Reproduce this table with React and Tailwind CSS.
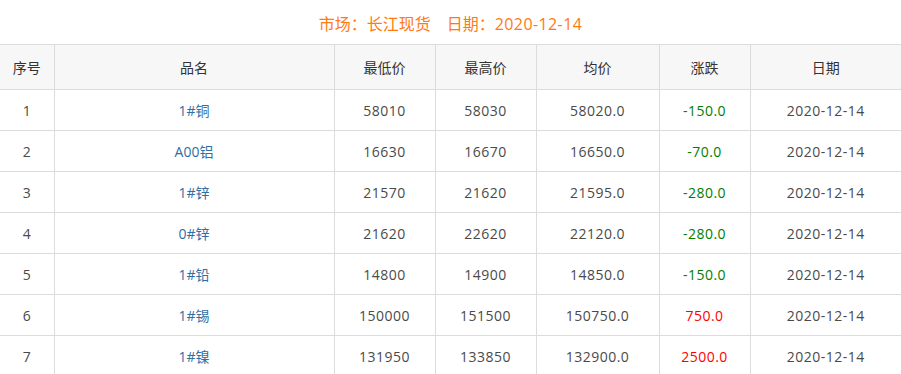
import React from 'react';

const rows = [
  { id: 1, name: '1#铜', low: '58010', high: '58030', avg: '58020.0', change: '-150.0', date: '2020-12-14' },
  { id: 2, name: 'A00铝', low: '16630', high: '16670', avg: '16650.0', change: '-70.0', date: '2020-12-14' },
  { id: 3, name: '1#锌', low: '21570', high: '21620', avg: '21595.0', change: '-280.0', date: '2020-12-14' },
  { id: 4, name: '0#锌', low: '21620', high: '22620', avg: '22120.0', change: '-280.0', date: '2020-12-14' },
  { id: 5, name: '1#铅', low: '14800', high: '14900', avg: '14850.0', change: '-150.0', date: '2020-12-14' },
  { id: 6, name: '1#锡', low: '150000', high: '151500', avg: '150750.0', change: '750.0', date: '2020-12-14' },
  { id: 7, name: '1#镍', low: '131950', high: '133850', avg: '132900.0', change: '2500.0', date: '2020-12-14' },
];

const headers = ['序号', '品名', '最低价', '最高价', '均价', '涨跌', '日期'];
const widths = ['w-[54px]', 'w-[280px]', 'w-[101px]', 'w-[101px]', 'w-[123px]', 'w-[91px]', 'w-[151px]'];

// numeric cells get a touch of tracking so digits run as wide as the original
const num = 'text-center border-b border-l border-[#dcdcdc] tracking-[0.5px]';

const App = () => {
  return (
    <div className="w-[901px] bg-white font-['Open_Sans','Noto_Sans_CJK_SC',sans-serif] text-[#4a4a4a]">
      <div className="h-[44px] flex items-center justify-center pt-[4px] text-[16px] text-[#ff7a12]">
        <span>市场：长江现货</span>
        <span className="ml-[16px]">日期：<span className="tracking-[0.4px]">2020-12-14</span></span>
      </div>

      <table className="w-[901px] table-fixed border-collapse text-[14px]">
        <thead>
          <tr className="bg-[#f7f7f7] h-[45px]">
            {headers.map((h, i) => (
              <th
                key={h}
                className={`${widths[i]} font-normal text-center text-[#333] border-y border-[#dcdcdc] ${i > 0 ? 'border-l' : ''}`}
              >
                {h}
              </th>
            ))}
          </tr>
        </thead>
        <tbody>
          {rows.map((r) => {
            const up = !r.change.startsWith('-');
            return (
              <tr key={r.id} className="h-[41px]">
                <td className="text-center border-b border-[#dcdcdc]">{r.id}</td>
                <td className="text-center border-b border-l border-[#dcdcdc] text-[#2f6ea5]">{r.name}</td>
                <td className={num}>{r.low}</td>
                <td className={num}>{r.high}</td>
                <td className={num}>{r.avg}</td>
                <td className={`${num} ${up ? 'text-[#ff0000]' : 'text-[#008000]'}`}>
                  {r.change}
                </td>
                <td className={num}>{r.date}</td>
              </tr>
            );
          })}
        </tbody>
      </table>
    </div>
  );
};

export default App;
